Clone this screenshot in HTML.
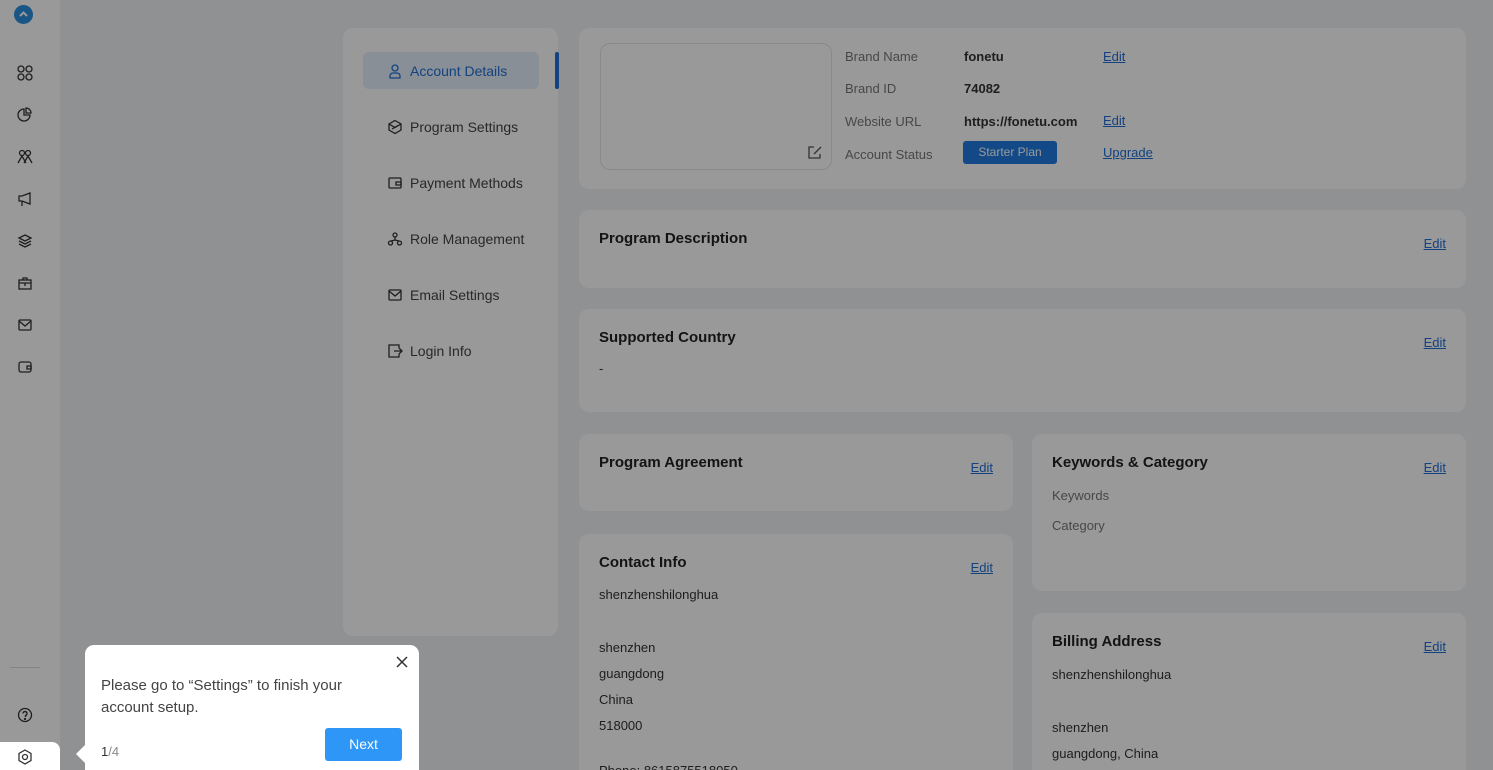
<!DOCTYPE html>
<html style="width:1493px;height:770px;overflow:hidden"><head><meta charset="utf-8"><style>
*{box-sizing:border-box;margin:0;padding:0}
body{width:1493px;height:770px;overflow:hidden;background:#f0f2f5;font-family:"Liberation Sans",sans-serif;position:relative;color:#333}
.wrap{position:absolute;left:0;top:0;width:1493px;height:770px;overflow:hidden}
.side{position:absolute;left:0;top:0;width:60px;height:770px;background:#fff}
.ic{position:absolute;left:16px;width:18px;height:18px}
.card{position:absolute;background:#fff;border-radius:10px}
.nav{left:343px;top:28px;width:215px;height:608px}
.ni{position:absolute;left:20px;width:176px;height:37px;display:flex;align-items:center;padding-left:24px;font-size:14px;color:#444;border-radius:6px}
.ni svg{position:absolute;left:24px}
.ni span{margin-left:23px}
.h{position:absolute;left:20px;top:20px;font-size:15px;font-weight:bold;color:#222}
.edit{position:absolute;right:20px;font-size:13px;color:#1f6fd6;text-decoration:underline}
.t{position:absolute;font-size:13px;color:#333}
.g{color:#777}
.ov{position:absolute;left:0;top:0;width:1493px;height:770px;background:rgba(0,0,0,.4)}
</style></head><body><div class="wrap">
<div class="side">
<div style="position:absolute;left:14px;top:5px;width:19px;height:19px;border-radius:50%;background:#2a8fe0"><svg width="19" height="19"><path d="M6 11l3.5-3.5L13 11" stroke="#fff" stroke-width="2" fill="none"/></svg></div>
<svg class="ic" style="top:64px" viewBox="0 0 18 18" fill="none" stroke="#333" stroke-width="1.3"><circle cx="5" cy="5" r="3"/><circle cx="13" cy="5" r="3"/><circle cx="5" cy="13" r="3"/><circle cx="13" cy="13" r="3"/></svg>
<svg class="ic" style="top:106px" viewBox="0 0 18 18" fill="none" stroke="#333" stroke-width="1.3"><path d="M8 3a6 6 0 1 0 6 6H8z"/><path d="M10 2v5h5a5 5 0 0 0-5-5z"/></svg>
<svg class="ic" style="top:148px" viewBox="0 0 18 18" fill="none" stroke="#333" stroke-width="1.3"><circle cx="6" cy="5" r="2.5"/><circle cx="12" cy="5" r="2.5"/><path d="M2 15l4-7 4 7M8 15l4-7 4 7"/></svg>
<svg class="ic" style="top:190px" viewBox="0 0 18 18" fill="none" stroke="#333" stroke-width="1.3"><path d="M3 6h3l8-3v11l-8-3H3zM6 11v5"/></svg>
<svg class="ic" style="top:232px" viewBox="0 0 18 18" fill="none" stroke="#333" stroke-width="1.3"><path d="M9 3l6 3-6 3-6-3zM3 9l6 3 6-3M3 12l6 3 6-3"/></svg>
<svg class="ic" style="top:274px" viewBox="0 0 18 18" fill="none" stroke="#333" stroke-width="1.3"><rect x="3" y="6" width="12" height="9"/><path d="M3 9h12M7 6V4h4v2M9 9v3"/></svg>
<svg class="ic" style="top:316px" viewBox="0 0 18 18" fill="none" stroke="#333" stroke-width="1.3"><rect x="3" y="4" width="12" height="10" rx="1"/><path d="M3 5l6 5 6-5"/></svg>
<svg class="ic" style="top:358px" viewBox="0 0 18 18" fill="none" stroke="#333" stroke-width="1.3"><rect x="3" y="4" width="12" height="10" rx="2"/><path d="M11 8h4v3h-4z"/></svg>
<div style="position:absolute;left:10px;top:667px;width:30px;border-top:1px solid #ddd"></div>
<svg class="ic" style="top:706px" viewBox="0 0 18 18" fill="none" stroke="#333" stroke-width="1.3"><circle cx="9" cy="9" r="6.5"/><path d="M7 7.5a2 2 0 1 1 2.5 2V11"/><circle cx="9" cy="13" r=".5"/></svg>
</div>
<div class="card nav">
<div class="ni" style="top:24px;background:#e3eefb;color:#1f6fd6"><svg width="16" height="16" viewBox="0 0 16 16" fill="none" stroke="#1f6fd6" stroke-width="1.3"><circle cx="8" cy="5" r="3"/><path d="M3 15v-2a3 3 0 0 1 3-3h4a3 3 0 0 1 3 3v2z"/></svg><span>Account Details</span></div>
<div style="position:absolute;left:212px;top:24px;width:4px;height:37px;background:#1f6fd6;border-radius:2px"></div>
<div class="ni" style="top:80px"><svg width="16" height="16" viewBox="0 0 16 16" fill="none" stroke="#333" stroke-width="1.3"><path d="M8 1.5l6 3.5v6l-6 3.5-6-3.5V5z M2 5l6 3.5L14 5M5 10l6-3.5"/></svg><span>Program Settings</span></div>
<div class="ni" style="top:136px"><svg width="16" height="16" viewBox="0 0 16 16" fill="none" stroke="#333" stroke-width="1.3"><rect x="2" y="3" width="12" height="10" rx="1"/><path d="M9 7h5v3H9z"/></svg><span>Payment Methods</span></div>
<div class="ni" style="top:192px"><svg width="16" height="16" viewBox="0 0 16 16" fill="none" stroke="#333" stroke-width="1.3"><circle cx="8" cy="4" r="2"/><circle cx="3.5" cy="12" r="2"/><circle cx="12.5" cy="12" r="2"/><path d="M8 6v3M4 10l4-1 4 1"/></svg><span>Role Management</span></div>
<div class="ni" style="top:248px"><svg width="16" height="16" viewBox="0 0 16 16" fill="none" stroke="#333" stroke-width="1.3"><rect x="2" y="3" width="12" height="10" rx="1"/><path d="M2 4l6 5 6-5"/></svg><span>Email Settings</span></div>
<div class="ni" style="top:304px"><svg width="16" height="16" viewBox="0 0 16 16" fill="none" stroke="#333" stroke-width="1.3"><path d="M12 5V2H2v12h10v-3M7 8h8M12 5l3 3-3 3"/></svg><span>Login Info</span></div>
</div>
<div class="card" style="left:579px;top:28px;width:887px;height:161px">
<div style="position:absolute;left:21px;top:15px;width:232px;height:127px;border:1px solid #e4e4e4;border-radius:10px"><svg style="position:absolute;right:8px;bottom:8px" width="16" height="16" viewBox="0 0 16 16" fill="none" stroke="#555" stroke-width="1.3"><path d="M13 9v4H2V2h5"/><path d="M7 9l7-7"/></svg></div>
<div class="t g" style="left:266px;top:21px">Brand Name</div><div class="t" style="left:385px;top:21px;font-weight:bold">fonetu</div><div class="t" style="left:524px;top:21px;color:#1f6fd6;text-decoration:underline">Edit</div>
<div class="t g" style="left:266px;top:53px">Brand ID</div><div class="t" style="left:385px;top:53px;font-weight:bold">74082</div>
<div class="t g" style="left:266px;top:86px">Website URL</div><div class="t" style="left:385px;top:86px;font-weight:bold">https://fonetu.com</div><div class="t" style="left:524px;top:85px;color:#1f6fd6;text-decoration:underline">Edit</div>
<div class="t g" style="left:266px;top:119px">Account Status</div>
<div style="position:absolute;left:384px;top:113px;width:94px;height:23px;background:#1f7ae0;border-radius:3px;color:#fff;font-size:12px;text-align:center;line-height:23px">Starter Plan</div>
<div class="t" style="left:524px;top:117px;color:#1f6fd6;text-decoration:underline">Upgrade</div>
</div>
<div class="card" style="left:579px;top:210px;width:887px;height:78px"><div class="h">Program Description</div><div class="edit" style="top:26px">Edit</div></div>
<div class="card" style="left:579px;top:309px;width:887px;height:103px"><div class="h">Supported Country</div><div class="edit" style="top:26px">Edit</div><div class="t" style="left:20px;top:52px">-</div></div>
<div class="card" style="left:579px;top:434px;width:434px;height:77px"><div class="h">Program Agreement</div><div class="edit" style="top:26px">Edit</div></div>
<div class="card" style="left:1032px;top:434px;width:434px;height:157px"><div class="h">Keywords &amp; Category</div><div class="edit" style="top:26px">Edit</div><div class="t g" style="left:20px;top:54px">Keywords</div><div class="t g" style="left:20px;top:84px">Category</div></div>
<div class="card" style="left:579px;top:534px;width:434px;height:236px;border-radius:10px 10px 0 0"><div class="h">Contact Info</div><div class="edit" style="top:26px">Edit</div>
<div class="t" style="left:20px;top:53px">shenzhenshilonghua</div><div class="t" style="left:20px;top:106px">shenzhen</div><div class="t" style="left:20px;top:132px">guangdong</div><div class="t" style="left:20px;top:158px">China</div><div class="t" style="left:20px;top:184px">518000</div><div class="t" style="left:20px;top:229px">Phone: 8615875518050</div></div>
<div class="card" style="left:1032px;top:613px;width:434px;height:157px;border-radius:10px 10px 0 0"><div class="h">Billing Address</div><div class="edit" style="top:26px">Edit</div>
<div class="t" style="left:20px;top:54px">shenzhenshilonghua</div><div class="t" style="left:20px;top:107px">shenzhen</div><div class="t" style="left:20px;top:133px">guangdong, China</div></div>
<div class="ov"></div>
<div style="position:absolute;left:0;top:742px;width:60px;height:28px;background:#fff;border-top-right-radius:8px"><svg style="position:absolute;left:16px;top:6px" width="18" height="18" viewBox="0 0 18 18" fill="none" stroke="#333" stroke-width="1.3"><path d="M9 2l6 3.5v7L9 16l-6-3.5v-7z"/><circle cx="9" cy="9" r="2.5"/></svg></div>
<div style="position:absolute;left:76px;top:745px;width:0;height:0;border-top:9px solid transparent;border-bottom:9px solid transparent;border-right:9px solid #fff"></div>
<div style="position:absolute;left:85px;top:645px;width:334px;height:125px;background:#fff;border-radius:9px 9px 0 0">
<svg style="position:absolute;left:310px;top:10px" width="14" height="14" viewBox="0 0 14 14" stroke="#333" stroke-width="1.5"><path d="M2 2l10 10M12 2L2 12"/></svg>
<div style="position:absolute;left:16px;top:30px;font-size:15px;line-height:22px;color:#444">Please go to “Settings” to finish your<br>account setup.</div>
<div style="position:absolute;left:16px;top:99px;font-size:13px;color:#333">1<span style="color:#888">/4</span></div>
<div style="position:absolute;left:240px;top:83px;width:77px;height:33px;background:#2d96f6;border-radius:3px;color:#fff;font-size:14px;text-align:center;line-height:33px">Next</div>
</div>
</div></body></html>
